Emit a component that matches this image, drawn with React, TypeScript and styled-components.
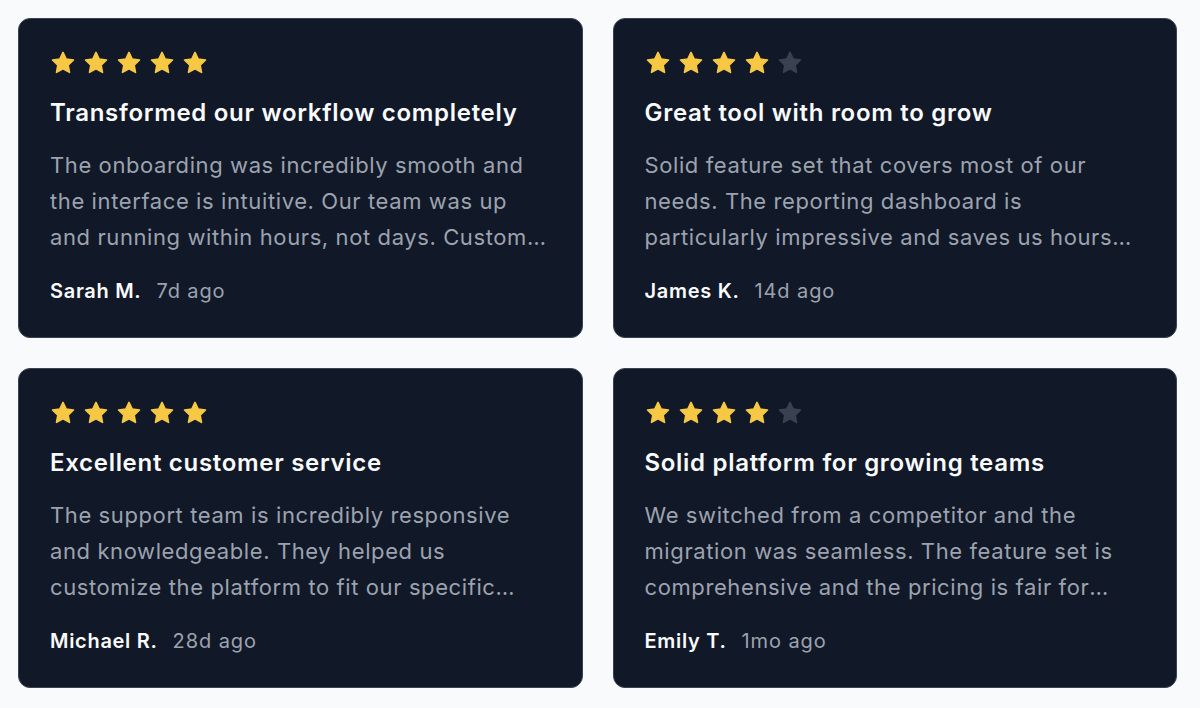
import styled, { createGlobalStyle } from "styled-components"

const GlobalStyle = createGlobalStyle`
    html, body {
        margin: 0;
        padding: 0;
        background: #f9fafb;
        font-family: Inter, "Noto Sans", sans-serif;
        -webkit-font-smoothing: antialiased;
    }
`;

interface Review {
    rating: number,
    title: string,
    body: string,
    author: string,
    ago: string,
}

const reviews: Review[] = [
    {
        rating: 5,
        title: "Transformed our workflow completely",
        body: "The onboarding was incredibly smooth and the interface is intuitive. Our team was up and running within hours, not days. Customer support has been outstanding whenever we had questions.",
        author: "Sarah M.",
        ago: "7d ago",
    },
    {
        rating: 4,
        title: "Great tool with room to grow",
        body: "Solid feature set that covers most of our needs. The reporting dashboard is particularly impressive and saves us hours every week, though a few integrations are still missing.",
        author: "James K.",
        ago: "14d ago",
    },
    {
        rating: 5,
        title: "Excellent customer service",
        body: "The support team is incredibly responsive and knowledgeable. They helped us customize the platform to fit our specific workflow and followed up to make sure everything worked.",
        author: "Michael R.",
        ago: "28d ago",
    },
    {
        rating: 4,
        title: "Solid platform for growing teams",
        body: "We switched from a competitor and the migration was seamless. The feature set is comprehensive and the pricing is fair for what you get, especially for smaller teams.",
        author: "Emily T.",
        ago: "1mo ago",
    },
];

const Star = ({ filled }: { filled: boolean }) => (
    <SStarSvg viewBox="0 0 24 24" $filled={filled}>
        <path d="M12 2.2l2.95 6.2 6.75.85-4.95 4.7 1.25 6.7L12 17.35 6 20.65l1.25-6.7L2.3 9.25l6.75-.85z" />
    </SStarSvg>
);

const ReviewCard = ({ review }: { review: Review }) => (
    <SCard>
        <SStars>
            {[0, 1, 2, 3, 4].map((i) => (
                <Star key={i} filled={i < review.rating} />
            ))}
        </SStars>
        <STitle>{review.title}</STitle>
        <SBody>{review.body}</SBody>
        <SFooter>
            <SAuthor>{review.author}</SAuthor>
            <STime>{review.ago}</STime>
        </SFooter>
    </SCard>
);

export default function App() {
    return (
        <>
            <GlobalStyle />
            <SGrid>
                {reviews.map((r) => (
                    <ReviewCard key={r.author} review={r} />
                ))}
            </SGrid>
        </>
    )
}

const SGrid = styled.div`
    display: grid;
    grid-template-columns: 1fr 1fr;
    gap: 30px;
    padding: 18px 23px 20px 18px;
`;

const SCard = styled.div`
    box-sizing: border-box;
    height: 320px;
    background: #111827;
    border: 1px solid #3a4252;
    border-radius: 12px;
    padding: 31px 31px;
    display: flex;
    flex-direction: column;
`;

const SStars = styled.div`
    display: flex;
    gap: 7px;
    height: 26px;
    align-items: center;
`;

const SStarSvg = styled.svg<{ $filled: boolean }>`
    width: 26px;
    height: 26px;
    fill: ${(p) => (p.$filled ? "#f6c843" : "#3a4150")};
    stroke: ${(p) => (p.$filled ? "#f6c843" : "#3a4150")};
    stroke-width: 1.5;
    stroke-linejoin: round;
`;

const STitle = styled.h3`
    margin: 21px 0 0;
    font-size: 24px;
    line-height: 32px;
    font-weight: 600;
    letter-spacing: 0.7px;
    color: #f9fafb;
`;

const SBody = styled.p`
    margin: 18px 0 0;
    font-size: 22px;
    line-height: 36px;
    letter-spacing: 0.6px;
    color: #9ca3af;
    display: -webkit-box;
    -webkit-line-clamp: 3;
    -webkit-box-orient: vertical;
    overflow: hidden;
`;

const SFooter = styled.div`
    margin-top: 21px;
    display: flex;
    align-items: baseline;
    gap: 15px;
    line-height: 30px;
`;

const SAuthor = styled.span`
    font-size: 20px;
    font-weight: 600;
    letter-spacing: 0.7px;
    color: #f9fafb;
`;

const STime = styled.span`
    font-size: 20px;
    letter-spacing: 0.9px;
    color: #9ca3af;
`;
